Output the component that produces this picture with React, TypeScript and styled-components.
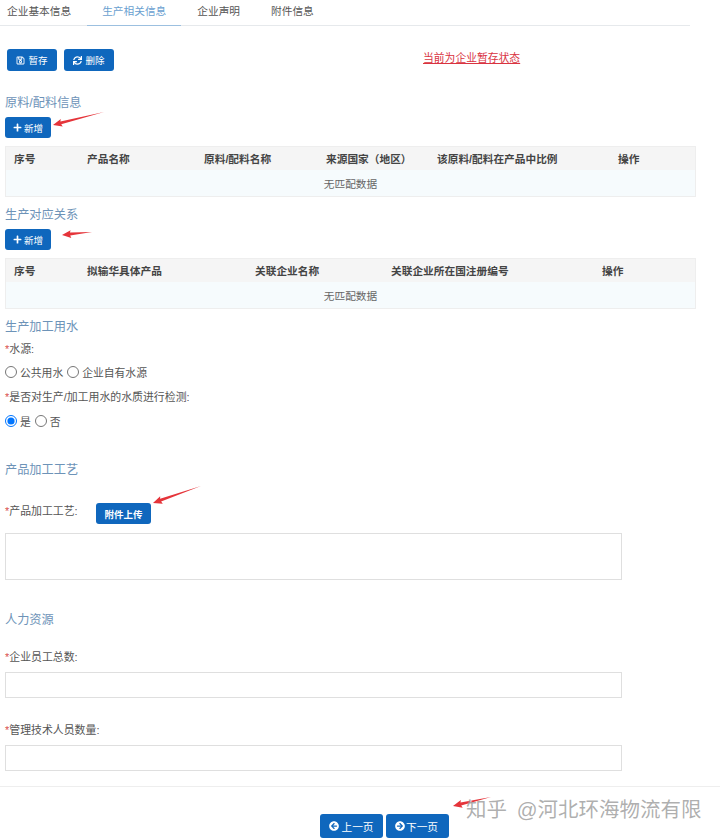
import React from 'react';
import styled, { createGlobalStyle } from 'styled-components';
import { FaArrowCircleLeft, FaArrowCircleRight, FaPlus, FaRegSave, FaSync } from 'react-icons/fa';

const GlobalStyle = createGlobalStyle`
  html, body {
    margin: 0;
    padding: 0;
    background: #fff;
  }
  body {
    font-family: "Liberation Sans", "Noto Sans CJK SC", sans-serif;
    color: #555;
    font-size: 11px;
  }
`;

const Page = styled.div`
  position: relative;
  width: 720px;
  height: 839px;
  overflow: hidden;
`;

const Tabs = styled.nav`
  display: flex;
  width: 690px;
  height: 25px;
  border-bottom: 1px solid #e6e9ec;
`;

const Tab = styled.div<{ $active?: boolean }>`
  padding: 0 15px;
  margin-right: 1px;
  line-height: 22px;
  font-size: 10.7px;
  color: ${p => (p.$active ? '#6a9fd0' : '#555')};
  border-bottom: 1px solid ${p => (p.$active ? '#9cc0e0' : 'transparent')};
  margin-bottom: -1px;

  &:first-child {
    padding-left: 7px;
  }
`;

const Toolbar = styled.div`
  display: flex;
  margin: 23px 0 0 7px;
`;

const Button = styled.button<{ $w: number; $h?: number }>`
  display: inline-flex;
  align-items: center;
  justify-content: center;
  gap: 3px;
  width: ${p => p.$w}px;
  height: ${p => p.$h ?? 22}px;
  padding: 0;
  border: 0;
  border-radius: 3px;
  background: #0f67bd;
  color: #fff;
  font-family: inherit;
  font-size: 9.5px;

  svg {
    flex: none;
    font-size: 9px;
  }
`;

const SaveButton = styled(Button)`
  margin-right: 7px;
`;

const Notice = styled.a`
  margin: 2px 0 0 309px;
  font-size: 10.8px;
  line-height: 14px;
  color: #d9333f;
  text-decoration: underline;
`;

const Title = styled.h3<{ $top: number }>`
  height: 16px;
  margin: ${p => p.$top}px 0 0 5px;
  font-size: 12.2px;
  line-height: 18px;
  font-weight: 400;
  color: #6d93b8;
`;

const AddButton = styled(Button)`
  display: flex;
  margin: 7px 0 0 5px;
  gap: 2px;
  font-size: 9.5px;
`;

const Table = styled.div`
  width: 691px;
  height: 51px;
  margin: 8px 0 0 5px;
  box-sizing: border-box;
  border: 1px solid #eeeeee;
`;

const HeadRow = styled.div<{ $cols: string }>`
  display: grid;
  grid-template-columns: ${p => p.$cols};
  height: 23px;
  padding-left: 8px;
  background: #f5f5f5;
  line-height: 25px;
  font-size: 10.7px;
  font-weight: 700;
  color: #444;
`;

const EmptyRow = styled.div`
  height: 26px;
  background: #f6fbfd;
  line-height: 28px;
  text-align: center;
  font-size: 10.7px;
  color: #666;
`;

const Label = styled.div<{ $top: number }>`
  margin: ${p => p.$top}px 0 0 5px;
  font-size: 10.9px;
  line-height: 16px;
  color: #555;
`;

const Star = styled.span`
  color: #d9534f;
`;

const RadioRow = styled.div<{ $top?: number }>`
  display: flex;
  align-items: center;
  height: 16px;
  margin: ${p => p.$top ?? 7}px 0 0 5px;
  font-size: 10.8px;
  color: #555;
`;

const RadioItem = styled.label`
  display: inline-flex;
  align-items: center;
  gap: 3px;
  margin-right: 4px;
`;

const Radio = styled.input`
  width: 12px;
  height: 12px;
  margin: 0;
`;

const UploadRow = styled.div`
  display: flex;
  margin-top: 26px;

  ${Label} {
    margin-top: 0;
    width: 91px;
  }
`;

const UploadButton = styled(Button)`
  font-weight: 700;
  font-size: 9.5px;
`;

const TextArea = styled.div`
  width: 617px;
  height: 47px;
  margin: 9px 0 0 5px;
  box-sizing: border-box;
  border: 1px solid #dfdfdf;
`;

const Input = styled.div`
  width: 617px;
  height: 26px;
  margin: 7px 0 0 5px;
  box-sizing: border-box;
  border: 1px solid #dfdfdf;
`;

const Footer = styled.div`
  display: flex;
  gap: 3px;
  margin-top: 15px;
  padding: 27px 0 0 320px;
  border-top: 1px solid #eeeeee;
`;

const PageButton = styled(Button)`
  gap: 2px;
  font-size: 10.7px;
  font-weight: 400;

  svg {
    font-size: 10px;
  }
`;

const NextButton = styled(PageButton)`
  gap: 1px;
  padding-right: 2px;
`;

const Arrow = styled.svg<{ $x: number; $y: number }>`
  position: absolute;
  left: ${p => p.$x}px;
  top: ${p => p.$y}px;
  overflow: visible;
`;

const Watermark = styled.div`
  position: absolute;
  left: 466px;
  top: 795px;
  font-size: 20.5px;
  line-height: 30px;
  word-spacing: 4px;
  white-space: nowrap;
  color: rgba(140, 140, 140, 0.7);
  text-shadow: 1px 1px 1px rgba(255, 255, 255, 0.9);
`;

// tip at the origin, tail at (dx, dy)
const RedArrow: React.FC<{ x: number; y: number; dx: number; dy: number; w?: number }> = ({ x, y, dx, dy, w = 3 }) => {
  const len = Math.hypot(dx, dy);
  const ux = dx / len;
  const uy = dy / len;
  const nx = -uy;
  const ny = ux;
  const b = Math.min(9, len * 0.35);
  const pts = [
    [0, 0],
    [ux * b + nx * w * 1.3, uy * b + ny * w * 1.3],
    [ux * b * 0.9 + nx * w * 0.45, uy * b * 0.9 + ny * w * 0.45],
    [dx, dy],
    [ux * b * 0.9 - nx * w * 0.55, uy * b * 0.9 - ny * w * 0.55],
    [ux * b - nx * w * 1.3, uy * b - ny * w * 1.3],
  ]
    .map(([a, c]) => `${a.toFixed(1)},${c.toFixed(1)}`)
    .join(' ');
  return (
    <Arrow $x={x} $y={y} width="1" height="1">
      <polygon points={pts} fill="#e5343a" />
    </Arrow>
  );
};

const Req: React.FC<{ text: string; top: number }> = ({ text, top }) => (
  <Label $top={top}>
    <Star>*</Star>
    {text}
  </Label>
);

const App: React.FC = () => {
  return (
    <Page>
      <GlobalStyle />
      <Tabs>
        <Tab>企业基本信息</Tab>
        <Tab $active>生产相关信息</Tab>
        <Tab>企业声明</Tab>
        <Tab>附件信息</Tab>
      </Tabs>

      <Toolbar>
        <SaveButton $w={50}>
          <FaRegSave />
          暂存
        </SaveButton>
        <Button $w={50}>
          <FaSync />
          删除
        </Button>
        <Notice>当前为企业暂存状态</Notice>
      </Toolbar>

      <Title $top={23}>原料/配料信息</Title>
      <AddButton $w={46} $h={21}>
        <FaPlus />
        新增
      </AddButton>
      <Table>
        <HeadRow $cols="73px 117px 122px 111px 181px 1fr">
          <span>序号</span>
          <span>产品名称</span>
          <span>原料/配料名称</span>
          <span>来源国家（地区）</span>
          <span>该原料/配料在产品中比例</span>
          <span>操作</span>
        </HeadRow>
        <EmptyRow>无匹配数据</EmptyRow>
      </Table>

      <Title $top={9}>生产对应关系</Title>
      <AddButton $w={46} $h={21}>
        <FaPlus />
        新增
      </AddButton>
      <Table>
        <HeadRow $cols="73px 168px 136px 211px 1fr">
          <span>序号</span>
          <span>拟输华具体产品</span>
          <span>关联企业名称</span>
          <span>关联企业所在国注册编号</span>
          <span>操作</span>
        </HeadRow>
        <EmptyRow>无匹配数据</EmptyRow>
      </Table>

      <Title $top={9}>生产加工用水</Title>
      <Req text="水源:" top={7} />
      <RadioRow>
        <RadioItem>
          <Radio type="radio" name="water" />
          公共用水
        </RadioItem>
        <RadioItem>
          <Radio type="radio" name="water" />
          企业自有水源
        </RadioItem>
      </RadioRow>
      <Req text="是否对生产/加工用水的水质进行检测:" top={9} />
      <RadioRow $top={8}>
        <RadioItem>
          <Radio type="radio" name="check" defaultChecked />
          是
        </RadioItem>
        <RadioItem>
          <Radio type="radio" name="check" />
          否
        </RadioItem>
      </RadioRow>

      <Title $top={32}>产品加工工艺</Title>
      <UploadRow>
        <Req text="产品加工工艺:" top={0} />
        <UploadButton $w={55} $h={21}>
          附件上传
        </UploadButton>
      </UploadRow>
      <TextArea />

      <Title $top={31}>人力资源</Title>
      <Req text="企业员工总数:" top={22} />
      <Input />
      <Req text="管理技术人员数量:" top={24} />
      <Input />

      <Footer>
        <PageButton $w={63} $h={24}>
          <FaArrowCircleLeft />
          上一页
        </PageButton>
        <NextButton $w={63} $h={24}>
          <FaArrowCircleRight />
          下一页
        </NextButton>
      </Footer>

      <RedArrow x={53} y={125} dx={51} dy={-13} />
      <RedArrow x={62} y={235} dx={30} dy={-3} />
      <RedArrow x={153} y={503} dx={48} dy={-17} />
      <RedArrow x={453} y={806} dx={38} dy={-9} />
      <Watermark>知乎 @河北环海物流有限</Watermark>
    </Page>
  );
};

export default App;
